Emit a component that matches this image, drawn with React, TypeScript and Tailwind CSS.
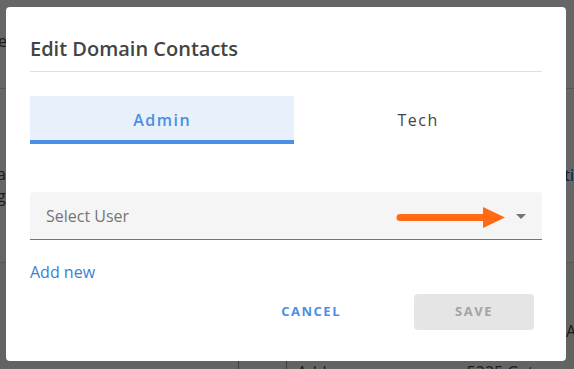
import { useState } from "react";

const FONT = "font-['Open_Sans',_'Liberation_Sans',_sans-serif]";

function BackgroundPage() {
  return (
    <div className="flex h-[369px] flex-col bg-white text-[16px] text-[#444]">
      <div className="flex h-[89px] items-center justify-between border-b border-[#d6d6d6]">
        <span className="-ml-[2px] pb-[6px]">e</span>
        <span />
      </div>
      <div className="flex h-[174px] items-start justify-between border-b border-[#d6d6d6]">
        <div className="-ml-[3px] flex flex-col pt-[74px] leading-[22px]">
          <span>a;</span>
          <span>g</span>
        </div>
        <span className="pt-[74px] text-[#1f3f73]">ti</span>
      </div>
      <div className="flex flex-1 items-end justify-between bg-[#f6fbf6]">
        <span />
        <span className="-mr-[2px] pb-[18px]">/A</span>
      </div>
      <div className="flex h-[8px] items-start bg-[#f6fbf6]">
        <div className="ml-[238px] h-full w-px bg-[#9a9a9a]" />
        <div className="ml-[47px] h-full w-px bg-[#9a9a9a]" />
        <span className="ml-[10px] mt-[3px] leading-[16px]">Add</span>
        <span className="ml-[140px] mt-[3px] leading-[16px]">5225 Gate Park</span>
      </div>
    </div>
  );
}

function Tab({ label, active, onClick }: { label: string; active: boolean; onClick: () => void }) {
  return (
    <button
      onClick={onClick}
      className={
        active
          ? "flex h-12 flex-auto items-center justify-center border-b-4 border-[#4a8fe8] bg-[#e8f0fb] pt-[4px] text-[16px] font-semibold tracking-[1.5px] text-[#4a8ee6]"
          : "flex h-12 flex-auto items-center justify-center border-b-4 border-transparent pt-[4px] text-[16px] tracking-[1.5px] text-[#444]"
      }
    >
      {label}
    </button>
  );
}

export default function App() {
  const [tab, setTab] = useState<"admin" | "tech">("admin");

  return (
    <div className={`relative h-[369px] w-[574px] overflow-hidden ${FONT}`}>
      <BackgroundPage />
      <div className="absolute inset-0 bg-black/60" />

      <div className="absolute left-[6px] top-[7px] flex h-[354px] w-[560px] flex-col rounded-[4px] bg-white px-6 pt-[29px]">
        <h2 className="border-b border-[#e0e0e0] pb-[9px] text-[20px] leading-[26px] font-semibold text-[#444]">
          Edit Domain Contacts
        </h2>

        <div className="mt-6 flex">
          <Tab label="Admin" active={tab === "admin"} onClick={() => setTab("admin")} />
          <Tab label="Tech" active={tab === "tech"} onClick={() => setTab("tech")} />
        </div>

        <div className="relative mt-12 flex h-12 items-center justify-between rounded-t-[4px] border-b border-[#757575] bg-[#f5f5f5] pl-4 pr-4">
          <span className="text-[16px] text-[#757575]">Select User</span>
          <svg width="10" height="5" viewBox="0 0 10 5" className="mt-[1px]">
            <path d="M0 0 L10 0 L5 5 Z" fill="#757575" />
          </svg>
          <svg
            width="120"
            height="30"
            viewBox="0 0 120 30"
            className="pointer-events-none absolute left-[364px] top-[11px]"
          >
            <line x1="6" y1="14.5" x2="92" y2="14.5" stroke="#ff6a13" strokeWidth="7" strokeLinecap="round" />
            <path d="M89 4 L111 14.5 L89 25 Z" fill="#ff6a13" />
          </svg>
        </div>

        <div className="mt-5">
          <a className="text-[16px] leading-6 text-[#3b7fd4]" href="#">
            Add new
          </a>
        </div>

        <div className="mt-[10px] flex items-center justify-end pr-2">
          <button className="mr-[73px] h-9 text-[13px] font-bold tracking-[1.5px] text-[#4a8fe8]">CANCEL</button>
          <button
            disabled
            className="h-9 w-[120px] rounded-[4px] bg-[#e5e5e5] text-[13px] font-bold tracking-[1.5px] text-[#a3a3a3]"
          >
            SAVE
          </button>
        </div>
      </div>
    </div>
  );
}
